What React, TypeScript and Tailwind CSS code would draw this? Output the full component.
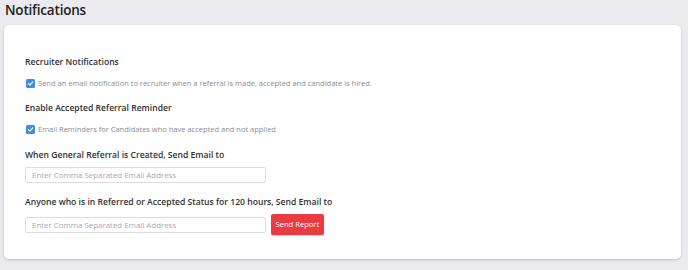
// Notification settings panel
import React from 'react';

const font = { fontFamily: '"Open Sans", "Noto Sans", sans-serif' };

// == Checkbox row ==
const CheckRow = ({ label }: { label: string }) => (
  <label className="flex items-center h-[12px] gap-[3px] pl-[1px]">
    <span className="w-[9px] h-[9px] rounded-[1.5px] bg-[#3d8fe0] flex items-center justify-center">
      <svg width="7" height="7" viewBox="0 0 10 10" fill="none">
        <path
          d="M2 5.2 4.2 7.3 8.2 2.8"
          stroke="#fff"
          strokeWidth="1.6"
          strokeLinecap="round"
          strokeLinejoin="round"
        />
      </svg>
    </span>
    <span className="text-[7.5px] text-[#8c8c92] leading-[12px]">{label}</span>
  </label>
);

// == Heading ==
const Heading = ({ label, className }: { label: string; className?: string }) => (
  <h3 className={`text-[8.6px] font-semibold text-[#2f2f33] leading-[12px] ${className ?? ''}`}>
    {label}
  </h3>
);

// == Email input ==
const EmailInput = () => (
  <input
    type="text"
    placeholder="Enter Comma Separated Email Address"
    className="w-[241px] h-[16px] border border-[#dcdce0] rounded-[2px] px-[6px] text-[7.9px] placeholder:text-[#a9a9ae] outline-none bg-white"
  />
);

// == Component =>
const App = () => {
  return (
    <div className="w-[688px] h-[270px] bg-[#ebebef] overflow-hidden" style={font}>
      <h1 className="text-[13.5px] font-semibold text-[#222226] leading-[20px] pl-[5px] tracking-[-0.2px]">
        Notifications
      </h1>
      <div className="mt-[5px] ml-[4px] w-[677px] bg-white rounded-[5px] shadow-[0_1px_3px_rgba(0,0,0,0.18)] px-[21px] pt-[31px] pb-[24px]">
        <Heading label="Recruiter Notifications" />
        <div className="mt-[9px]">
          <CheckRow label="Send an email notification to recruiter when a referral is made, accepted and candidate is hired." />
        </div>
        <Heading label="Enable Accepted Referral Reminder" className="mt-[13px]" />
        <div className="mt-[9px]">
          <CheckRow label="Email Reminders for Candidates who have accepted and not applied" />
        </div>
        <Heading label="When General Referral is Created, Send Email to" className="mt-[14px]" />
        <div className="mt-[6px] flex">
          <EmailInput />
        </div>
        <Heading
          label="Anyone who is in Referred or Accepted Status for 120 hours, Send Email to"
          className="mt-[13px]"
        />
        <div className="mt-[6px] flex items-center gap-[5px]">
          <EmailInput />
          <button className="h-[21px] px-[4.5px] rounded-[2px] bg-[#ea3b43] text-white text-[7.6px] shadow-[0_1px_1px_rgba(0,0,0,0.15)]">
            Send Report
          </button>
        </div>
      </div>
    </div>
  );
};

export default App;
